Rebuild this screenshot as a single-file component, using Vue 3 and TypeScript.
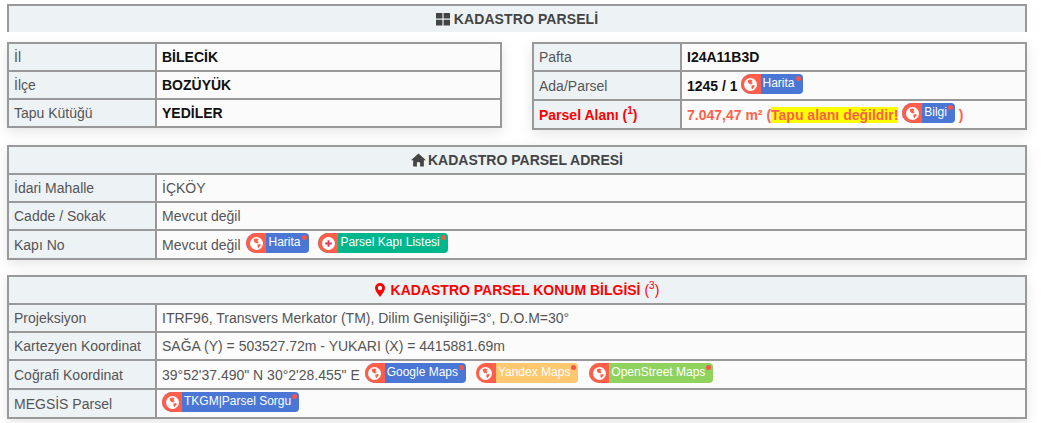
<script setup lang="ts">
type Tone = 'blue' | 'green' | 'yellow' | 'lime'
interface Badge { label: string; tone: Tone }

const land = 'M4 2.500l3-1 2 1-1 2 1.500 1-1.500 1.500-2-.5-1.500-1.500zM8 8l3-.5.5 1.500-2.500 3-1-1.500z'
const mapBadges: Badge[] = [
  { label: 'Google Maps', tone: 'blue' },
  { label: 'Yandex Maps', tone: 'yellow' },
  { label: 'OpenStreet Maps', tone: 'lime' },
]
</script>

<template>
  <div class="page">
    <div class="head-box">
      <svg class="ico" viewBox="0 0 14 14" width="14" height="14"><path fill="#444" d="M0 1h6.400v5.600H0zM7.600 1H14v5.600H7.600zM0 7.800h6.400v5.600H0zM7.600 7.800H14v5.600H7.600z"/></svg>
      KADASTRO PARSELİ
    </div>

    <div class="two">
      <table class="tbl half">
        <colgroup><col class="c1" /><col /></colgroup>
        <tbody>
          <tr><th>İl</th><td class="strong">BİLECİK</td></tr>
          <tr><th>İlçe</th><td class="strong">BOZÜYÜK</td></tr>
          <tr><th>Tapu Kütüğü</th><td class="strong">YEDİLER</td></tr>
        </tbody>
      </table>
      <table class="tbl half">
        <colgroup><col class="c1" /><col /></colgroup>
        <tbody>
          <tr><th>Pafta</th><td class="strong">I24A11B3D</td></tr>
          <tr class="tall">
            <th>Ada/Parsel</th>
            <td class="strong">1245 / 1 <span class="badge blue tight"><span class="cap"><svg viewBox="0 0 14 14" width="13" height="13"><circle cx="7" cy="7" r="7" fill="#fff"/><path fill="#ff5f4a" :d="land"/></svg></span><span class="lbl">Harita</span><i class="dot"></i></span></td>
          </tr>
          <tr class="tall alert">
            <th>Parsel Alanı (<sup>1</sup>)</th>
            <td class="area">7.047,47 m² (<mark>Tapu alanı değildir!</mark> <span class="badge blue flush"><span class="cap"><svg viewBox="0 0 14 14" width="13" height="13"><circle cx="7" cy="7" r="7" fill="#fff"/><path fill="#ff5f4a" :d="land"/></svg></span><span class="lbl">Bilgi</span><i class="dot"></i></span> )</td>
          </tr>
        </tbody>
      </table>
    </div>

    <table class="tbl full">
      <colgroup><col class="c1" /><col /></colgroup>
      <thead>
        <tr>
          <th colspan="2" class="title">
            <svg class="ico" viewBox="0 0 16 14" width="15" height="14"><path fill="#444" d="M8 0l8 7.200h-2.300V14H9.700V9.300H6.300V14H2.300V7.200H0z"/></svg>KADASTRO PARSEL ADRESİ
          </th>
        </tr>
      </thead>
      <tbody>
        <tr><th>İdari Mahalle</th><td>İÇKÖY</td></tr>
        <tr><th>Cadde / Sokak</th><td>Mevcut değil</td></tr>
        <tr class="tall">
          <th>Kapı No</th>
          <td>Mevcut değil <span class="badge blue lead"><span class="cap"><svg viewBox="0 0 14 14" width="13" height="13"><circle cx="7" cy="7" r="7" fill="#fff"/><path fill="#ff5f4a" :d="land"/></svg></span><span class="lbl">Harita</span><i class="dot"></i></span> <span class="badge green"><span class="cap"><svg viewBox="0 0 14 14" width="13" height="13"><circle cx="7" cy="7" r="7" fill="#fff"/><path fill="#e8305a" d="M6 3.500h2V6h2.500v2H8v2.500H6V8H3.500V6H6z"/></svg></span><span class="lbl">Parsel Kapı Listesi</span><i class="dot"></i></span></td>
        </tr>
      </tbody>
    </table>

    <table class="tbl full">
      <colgroup><col class="c1" /><col /></colgroup>
      <thead>
        <tr>
          <th colspan="2" class="title red">
            <svg class="ico pin" viewBox="0 0 10 14" width="10" height="14"><path fill="#f00" fill-rule="evenodd" d="M5 0a5 5 0 0 1 5 5c0 3-3 6-5 9-2-3-5-6-5-9a5 5 0 0 1 5-5zm0 2.800a2.200 2.200 0 1 0 0 4.400 2.200 2.200 0 0 0 0-4.400z"/></svg>
            KADASTRO PARSEL KONUM BİLGİSİ <span class="paren">(<sup>3</sup>)</span>
          </th>
        </tr>
      </thead>
      <tbody>
        <tr><th>Projeksiyon</th><td>ITRF96, Transvers Merkator (TM), Dilim Genişiliği=3°, D.O.M=30°</td></tr>
        <tr><th>Kartezyen Koordinat</th><td>SAĞA (Y) = 503527.72m - YUKARI (X) = 4415881.69m</td></tr>
        <tr class="tall">
          <th>Coğrafi Koordinat</th>
          <td>39°52'37.490" N 30°2'28.455" E <template v-for="(b, i) in mapBadges" :key="b.label"><span class="badge" :class="[b.tone, { nudge: i === 0 }]"><span class="cap"><svg viewBox="0 0 14 14" width="13" height="13"><circle cx="7" cy="7" r="7" fill="#fff"/><path fill="#ff5f4a" :d="land"/></svg></span><span class="lbl">{{ b.label }}</span><i class="dot"></i></span>{{ ' ' }}</template></td>
        </tr>
        <tr class="tall">
          <th>MEGSİS Parsel</th>
          <td><span class="badge blue"><span class="cap"><svg viewBox="0 0 14 14" width="13" height="13"><circle cx="7" cy="7" r="7" fill="#fff"/><path fill="#ff5f4a" :d="land"/></svg></span><span class="lbl">TKGM|Parsel Sorgu</span><i class="dot"></i></span></td>
        </tr>
      </tbody>
    </table>
  </div>
</template>

<style scoped>
.page {
  box-sizing: border-box;
  width: 1046px;
  height: 423px;
  overflow: hidden;
  padding: 4px 19px 0 7px;
  font-family: "Liberation Sans", Arial, sans-serif;
  font-size: 14px;
  color: #555;
}
.head-box {
  box-sizing: border-box;
  height: 28px;
  border: 2px solid #999;
  border-bottom: 0;
  background: #edf2f5;
  display: flex;
  align-items: center;
  justify-content: center;
  gap: 4px;
  font-weight: 700;
  letter-spacing: 0.1px;
  color: #444;
}
.two {
  display: flex;
  justify-content: space-between;
  align-items: flex-start;
  margin-top: 10px;
}
.tbl {
  border-collapse: collapse;
  background: #fbfbfb;
  box-shadow: 0 4px 12px rgba(0, 0, 0, 0.1);
  table-layout: fixed;
}
.half { width: 495px; }
.full { width: 1020px; margin-top: 15px; }
.c1 { width: 148px; }
.tbl th, .tbl td {
  border: 2px solid #999;
  padding: 0 5px;
  height: 26px;
  line-height: 20px;
  text-align: left;
  font-weight: 400;
  white-space: nowrap;
}
.tbl .tall th { height: 27px; }
.tbl .tall td {
  height: 25px;
  padding-top: 2px;
  line-height: 18px;
  vertical-align: top;
}
.tbl tbody th { background: #edf2f5; }
.tbl .title {
  text-align: center;
  background: #edf2f5;
  font-weight: 700;
  color: #444;
}
.title .ico { vertical-align: -2px; margin-right: 2px; }
.title.red { color: #f00; }
.paren { font-weight: 400; }
.tbl .strong { font-weight: 700; color: #111; }
.tbl .alert th { color: #f00; font-weight: 700; }
.tbl .area { color: #ff5f4a; font-weight: 700; }
mark { background: #ff0; color: #ff5f4a; }
sup { font-size: 10px; line-height: 0; }
.badge {
  position: relative;
  display: inline-flex;
  align-items: stretch;
  height: 20px;
  margin-right: 6px;
  border-radius: 10px 4px 4px 10px;
  overflow: hidden;
  color: #fff;
  font-size: 12px;
  font-weight: 400;
  line-height: 18px;
}
.lead { margin-left: 2px; }
.nudge { margin-left: 1px; }
.tight { margin-left: -1px; }
.flush { margin-right: 0; }
.cap {
  width: 20px;
  background: #ff5f4a;
  display: flex;
  align-items: center;
  justify-content: center;
}
.lbl { padding: 0 8px 0 2px; }
.dot {
  position: absolute;
  top: 2px;
  right: 2px;
  width: 5px;
  height: 5px;
  border-radius: 50%;
  background: #f4574a;
}
.blue { background: #4a76d6; }
.green { background: #00b78d; }
.yellow { background: #ffc76e; margin-right: 7px; }
.lime { background: #8fd35e; }
</style>
